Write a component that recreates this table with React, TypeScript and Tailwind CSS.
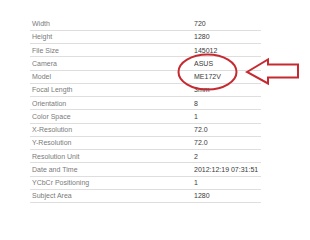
const rows: [string, string][] = [
  ["Width", "720"],
  ["Height", "1280"],
  ["File Size", "145012"],
  ["Camera", "ASUS"],
  ["Model", "ME172V"],
  ["Focal Length", "3mm"],
  ["Orientation", "8"],
  ["Color Space", "1"],
  ["X-Resolution", "72.0"],
  ["Y-Resolution", "72.0"],
  ["Resolution Unit", "2"],
  ["Date and Time", "2012:12:19 07:31:51"],
  ["YCbCr Positioning", "1"],
  ["Subject Area", "1280"],
];

export default function App() {
  return (
    <div className="relative w-[310px] h-[240px] bg-white overflow-hidden font-['Liberation_Sans',Arial,sans-serif]">
      <div className="pt-[17.5px] pl-[30px] w-[261px]">
        {rows.map(([label, value]) => (
          <div
            key={label}
            className="flex items-center h-[13.25px] border-b border-[#dedede] text-[7px] leading-none"
          >
            <span className="w-[164px] pl-[2px] text-[#7a7a7a]">{label}</span>
            <span className="text-[#3a3a3a]">{value}</span>
          </div>
        ))}
      </div>

      {/* red annotation: ellipse + arrow */}
      <svg
        className="absolute left-0 top-0"
        width="310"
        height="240"
        viewBox="0 0 310 240"
        fill="none"
      >
        <ellipse cx="207.5" cy="72" rx="29" ry="17.5" stroke="#c62a31" strokeWidth="2" />
        <path
          d="M247 72 L268 59.5 L268 64.5 L298 64.5 L298 77.5 L268 77.5 L268 83.5 Z"
          stroke="#c62a31"
          strokeWidth="2"
          strokeLinejoin="miter"
        />
      </svg>
    </div>
  );
}
